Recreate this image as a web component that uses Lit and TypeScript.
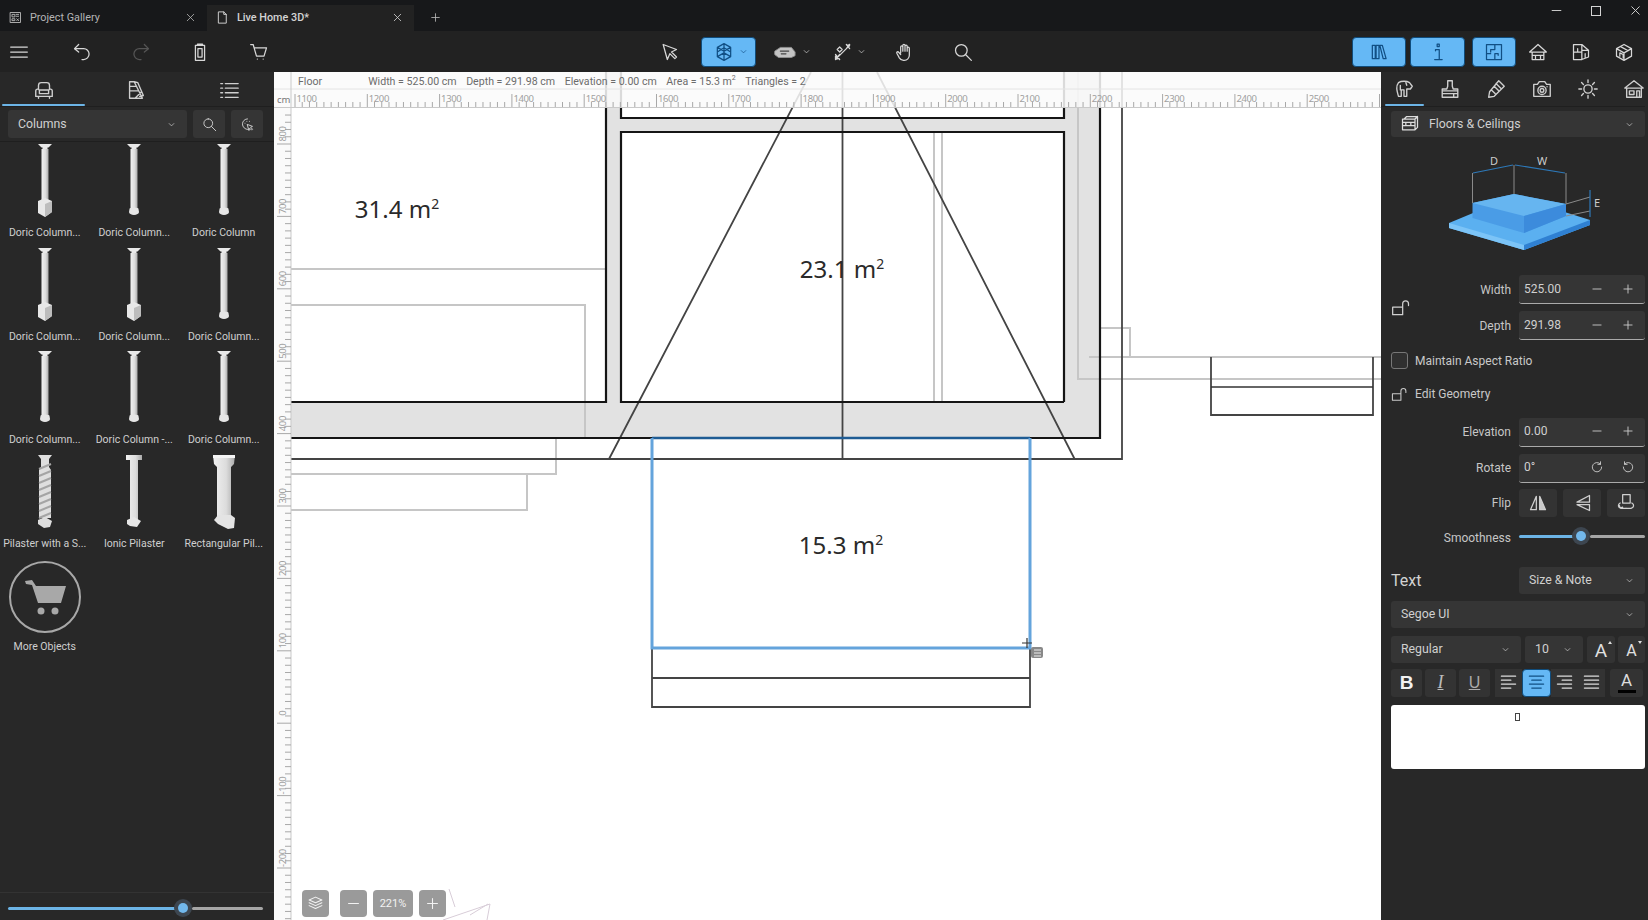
import { LitElement, html, css, svg } from "lit";
import { customElement } from "lit/decorators.js";

const ic = (d: string, cls = "") => html`<svg class="ico ${cls}" viewBox="0 0 24 24"><path d=${d}></path></svg>`;
const P = {
  gallery: "M4 4h16v16H4z M7 7h4v4H7z M13 7h4 M13 10h4 M7 14h4v3H7z M14 14l3 3 M17 14l-3 3",
  doc: "M6 3h8l4 4v14H6z M14 3v4h4",
  close: "M6 6l12 12M18 6L6 18",
  plus: "M5 12h14M12 5v14",
  minus: "M5 12h14",
  menu: "M2 6h20M2 12h20M2 18h20",
  undo: "M8 3L3 8l5 4 M3 8h11a6.5 6.5 0 0 1 0 13h-2",
  redo: "M16 3l5 5-5 4 M21 8H10a6.5 6.5 0 0 0 0 13h2",
  clip: "M9 4V2.5h6V4 M6.5 4h11v18h-11z M9.5 8h5v10h-5z",
  cart: "M2 3h3l4 14h9l3-10H6 M10 20.5h.01 M17 20.5h.01",
  cursor: "M5 3l5 18 3-7 6 6 2-2-6-6 6-3z",
  cube: "M12 2l8 4.5v11L12 22l-8-4.5v-11z M4 6.5L12 11l8-4.5 M12 11v11 M4 12l8-5 8 5 M4 17.5L12 13l8 4.5 M12 2v9",
  floor: "M1 11l6-4h12l4 5v4l-4 2H5l-4-3z",
  floorIn: "M7 11h9M8 14h5",
  dims: "M4 20L20 4 M3 17l3 3-3 1z M17 4l3-1-1 3 M8 6l3 3-3 3-3-3z M16 3l4 5 M20 3l-4 5 M3 15l5 6 M8 15l-5 6",
  hand: "M8 13V6a1.3 1.3 0 0 1 2.6 0v5 M10.6 11V4a1.3 1.3 0 0 1 2.6 0v7 M13.2 11V5a1.3 1.3 0 0 1 2.6 0v6 M15.8 11V7.5a1.3 1.3 0 0 1 2.6 0V16a6 6 0 0 1-6 6h-1a6 6 0 0 1-5-3l-3-5.5c-.7-1.4 1.2-2.5 2.2-1.2L8 15",
  search: "M10 3a7 7 0 1 1 0 14 7 7 0 0 1 0-14z M15 15l7 7",
  books: "M4 4h3.5v16H4z M8.5 4H12v16H8.5z M13 4h3l4.5 16h-3.5z",
  info: "M11 2.500h2.500v3H11z M9 9h4.500v11 M8 21h9 M9 9v1.500",
  plan: "M3 3h18v18H3z M13 3v6H8v3 M13 21v-7h4v2 M3 14h5",
  home: "M12 3L2 12h3v9h14v-9h3z M5 12h14 M9 21v-5h6v5 M5 16h14",
  homePlan: "M3 3h10l8 7v8l-8 3H3z M13 3v18 M3 12h10 M8 8v4 M13 10h8 M17 14v5",
  home3d: "M12 3l9 5v9l-9 5-9-5V8z M3 8l9 5 9-5 M12 13v9 M8 5.5l9 5 M7 17v-4l4 2v4",
  sofa: "M6 11V7a3 3 0 0 1 3-3h6a3 3 0 0 1 3 3v4 M3 13a2 2 0 0 1 4 0v3h10v-3a2 2 0 0 1 4 0v6H3z M6 19v2 M18 19v2 M7 12h10",
  swatch: "M5 3h5l9 18H5z M10 3l4 1 6 14-4 1 M5 8h7 M5 13h9.5 M11 21l7-7",
  list: "M3 5h2M8 5h14M3 10h2M8 10h14M3 15h2M8 15h14M3 20h2M8 20h14",
  tree: "M6 20c-2-7-3-11 0-15 3-2 9-2 12 0l3 4-2 3h-4v8h-3v-7H9v7z M14 5l1 3 M8 8v5",
  stamp: "M9.5 3h5v6l1 3h5v5h-17v-5h5l1-3z M3.5 17h17v4h-17z M3.5 14h17 M16 17v4",
  brush: "M15 3l6 6L10 20l-6 1 1-6z M12 6l6 6 M7 13l4 4 M10 9l5 5",
  camera: "M3 7h4l2-3h6l2 3h4v13H3z M12 9a4.5 4.5 0 1 1 0 9 4.5 4.5 0 0 1 0-9z M12 11.5a2 2 0 1 1 0 4 2 2 0 0 1 0-4z M17.5 9.5h.01",
  sun: "M12 7.5a4.5 4.5 0 1 1 0 9 4.5 4.5 0 0 1 0-9z M12 2v3M12 19v3M2 12h3M19 12h3M5 5l2 2M17 17l2 2M19 5l-2 2M7 17l-2 2",
  house: "M12 3L2 11h2v10h16V11h2z M4 11h16 M7 14h5v4H7z M15 14h3v7h-3z",
  floors: "M5 6l3-3h13v13l-3 3H3V6h15v13 M18 6l3-3 M3 10h15 M3 14h15 M7 10v4 M13 10v4",
  lock: "M2 11h12v9H2z M14 11V7a3.5 3.5 0 0 1 7 0v2",
  cw: "M18 7a8 8 0 1 0 2 5 M18 3v4.5h-4.5",
  ccw: "M6 7a8 8 0 1 1-2 5 M6 3v4.5h4.5",
  flipV: "M21 3v8L6 11z M21 21v-7L6 14z",
  flip3: "M8 2h9v10H8z M5 12C2 14 2 17 6 18.5h12c4-1.5 4-4.500 1-6.500 M12 18v.01 M4 15l1 3 3-1",
  pick: "M12 3a8 8 0 0 0-8 8c0 5 4 9 9 9 M8 10h.01 M11 7h.01 M15 7h.01 M12 12l8 3-3 1.500 3 3-1.500 1.500-3-3-1 3z",
  alL: "M3 4h18M3 9h12M3 14h18M3 19h12",
  alC: "M3 4h18M6 9h12M3 14h18M6 19h12",
  alR: "M3 4h18M9 9h12M3 14h18M9 19h12",
  alJ: "M3 4h18M3 9h18M3 14h18M3 19h18",
  layers: "M12 3l9 4-9 4-9-4z M3 11l9 4 9-4 M3 15l9 4 9-4",
  chev: "M7 10l5 5 5-5",
};

const tool = (d: string, cls = "") => html`<span class="tool ${cls}">${ic(d)}</span>`;

function column(kind: number) {
  return svg`<svg class="col" viewBox="0 0 44 76">
    <defs><linearGradient id="g${kind}"><stop offset="0" stop-color="#f1f1f1"/><stop offset=".6" stop-color="#dcdcdc"/><stop offset="1" stop-color="#a9a9a9"/></linearGradient></defs>
    ${kind === 5
      ? svg`<path d="M11 1h22l-1 9-3 3v50H15V13l-3-3z" fill="url(#g5)"/><path d="M12 66l4-5h13l4 3-1 10-6 1-10-5z" fill="#e4e4e4"/><path d="M11 1h22v3H11z" fill="#f4f4f4"/>`
      : kind === 4
      ? svg`<path d="M14 1h16v5h-4v60h-8V6h-4z" fill="url(#g4)"/><path d="M15 66l7-3 7 4-4 6-7-1-3-2z" fill="#e6e6e6"/>`
      : kind === 3
      ? svg`<path d="M15 1h14l-3 4v8l2 3v48h-12V16l2-3V5z" fill="#dedede"/>
        ${[0,1,2,3,4,5,6,7].map((i) => svg`<path d="M16 ${15 + i * 7}l12 -5" stroke="#a4a4a4" stroke-width="2"/>`)}
        <path d="M15 66l7-3 7 4-2 6-6 1-6-4z" fill="#ddd"/>`
      : svg`<path d="M15 1h14l-3.500 3.500h-1V6h-5V4.500h-1z" fill="#e9e9e9"/><rect x="18.500" y="6" width="7" height="${kind === 1 ? 52 : 60}" fill="url(#g${kind})"/>
        ${kind === 1
          ? svg`<path d="M15 58l7-3 7 3v11l-7 5-7-4z" fill="#e8e8e8"/><path d="M22 61l7-3v11l-7 5z" fill="#bdbdbd"/>`
          : svg`<path d="M17.500 66a4.500 1.500 0 0 1 9 0l.5 3a5 3 0 0 1-10 0z" fill="#e6e6e6"/>`}`}
  </svg>`;
}

const items: [string, number][] = [
  ["Doric Column...", 1], ["Doric Column...", 2], ["Doric Column", 2],
  ["Doric Column...", 1], ["Doric Column...", 1], ["Doric Column...", 2],
  ["Doric Column...", 2], ["Doric Column -...", 2], ["Doric Column...", 2],
  ["Pilaster with a S...", 3], ["Ionic Pilaster", 4], ["Rectangular Pil...", 5],
];

const range = (n: number) => Array.from({ length: n }, (_, i) => i);
const X0 = 295, XP = 72.3, Y0 = 142, YP = 72.4;

function rulers() {
  const hTicks = range(170).map((i) => {
    const x = X0 + (i * XP) / 10;
    if (x > 1381) return null;
    const major = i % 10 === 0;
    return svg`<line x1=${x} x2=${x} y1=${major ? 94 : 102} y2="107" class="tick"/>`;
  });
  const hLabels = range(15).map((i) => svg`<text class="rl" x=${X0 + i * XP + 1.5} y="101.500">${1100 + i * 100}</text>`);
  const vTicks = range(115).map((i) => {
    const y = Y0 - 35 + (i * YP) / 10 + 0.8;
    const n = i - 5;
    const major = ((n % 10) + 10) % 10 === 0;
    return y > 108 && y < 920
      ? svg`<line y1=${y} y2=${y} x1=${major ? 277 : 285} x2="291" class="tick"/>` : null;
  });
  const vLabels = range(11).map((i) => {
    const y = Y0 + i * YP - 8;
    const v = 800 - i * 100;
    return svg`<text class="rl" transform="rotate(-90 286 ${y})" x="286" y=${y} text-anchor="middle">${v}</text>`;
  });
  return svg`${hTicks}${hLabels}${vTicks}${vLabels}`;
}

function area(x: number, y: number, t: string) {
  return svg`<text class="area" x=${x} y=${y} text-anchor="middle">${t} m<tspan class="sup" dy="-9">2</tspan></text>`;
}

function plan() {
  return svg`<svg class="plan" viewBox="274 72 1107 848">
    <rect x="274" y="72" width="1107" height="848" fill="#fff"/>
    <path d="M606 72H1100V438H291V402H606zM621 72V118H1064V72zM621 132V402H1064V132z" fill="#e2e2e2" fill-rule="evenodd"/>
    <g class="lg">
      <path d="M291 269H606M291 305H585V438M291 474H556V438M291 510H527V474"/>
      <path d="M934 132V402M942 132V402"/>
      <path d="M1064 72V118M1078 72V379H1381M1089 357H1381M1100 328H1130V357"/>
    </g>
    <g class="thin">
      <path d="M1211 357V415H1373V357M842.500 72V459M291 459H1122V72"/>
      <path d="M811 72L609 459M877 72L1074.600 459"/>
      <path d="M652 648V707H1030V648M652 678H1030"/>
    </g>
    <path class="thick" d="M606 72V402H291M1064 402V132H621V402H1064M621 72V118H1064V72M291 438H1100V72"/>
    <path d="M1211 387H1373" stroke="#333" stroke-width="1.500" fill="none"/>
    <path d="M652 438H1030" stroke="#1f5c94" stroke-width="2.500" fill="none"/>
    <path d="M652 438V648H1030V438" stroke="#64a4dc" stroke-width="3" fill="none"/>
    ${area(397, 218, "31.4")}${area(842, 278, "23.1")}${area(841, 554, "15.3")}
    <path d="M1022 643h10M1027 638v10" stroke="#333" stroke-width="1.200"/>
    <rect x="1031" y="647" width="12" height="11" rx="2" fill="#888"/>
    <path d="M1034 650h7M1034 653h7M1034 656h7" stroke="#eee"/>
    <path d="M449 889l6 18 M443 920l47-16-3 16 M470 915l18-11" stroke="#d8cdd8" fill="none"/>
    <rect x="274" y="72" width="1107" height="35" fill="#fafafa" opacity=".86"/>
    <rect x="274" y="107" width="17" height="813" fill="#fafafa"/>
    <path d="M274 89H1381" stroke="#e4e4e4"/>
    <path d="M291 72V920M274 107.500H1381" stroke="#c9c9c9"/>
    ${rulers()}
    <text class="rl cm" x="277" y="103">cm</text>
  </svg>`;
}

function diagram() {
  return svg`<svg class="diagram" viewBox="1391 137 254 138">
    <path d="M1449 223L1514 196 1590 220V225L1524 250 1449 228z" fill="#5bb0f0"/>
    <path d="M1449 223L1524 245V250L1449 228z" fill="#7cc4f7"/>
    <path d="M1524 245L1590 220V225L1524 250z" fill="#2f80d2"/>
    <path d="M1472.500 203V218L1524 233 1566 216V204L1514 194z" fill="#4a9ce6"/>
    <path d="M1472.500 203L1514 194 1566 204 1524 216z" fill="#66b5f0"/>
    <path d="M1524 216L1566 204V216L1524 233z" fill="#3c8bdc"/>
    <path d="M1472.500 173V203M1514 165V194M1566 173V204M1566 204L1590 197M1566 216L1590 211" stroke="#8a8a8a" fill="none"/>
    <path d="M1473 173L1513 165M1515 165L1565 173M1590 190V217" stroke="#2d78b8" stroke-width="1.200" fill="none"/>
    <text class="dl" x="1494" y="165" text-anchor="middle">D</text>
    <text class="dl" x="1542" y="165" text-anchor="middle">W</text>
    <text class="dl" x="1597" y="207" text-anchor="middle">E</text>
  </svg>`;
}

const slider = (fillPx: number) => html`<div class="slider">
  <span class="fill" style="width:${fillPx}px"></span><span class="thumb"></span><span class="rest"></span>
</div>`;

const numField = (label: string, value: string, a: string, b: string) => html`
  <span class="lab">${label}</span>
  <div class="input"><span class="val">${value}</span>${ic(a, "s")}${ic(b, "s")}</div>`;

@customElement("app-root")
export class AppRoot extends LitElement {
  static styles = css`
    :host { display: block; width: 1648px; height: 920px; overflow: hidden; background: #282828; font-family: Roboto, "Noto Sans", sans-serif; color: #d0d0d0; font-size: 11px; }
    * { box-sizing: border-box; }
    .ico { width: 20px; height: 20px; fill: none; stroke: currentColor; stroke-width: 1.500; stroke-linecap: round; stroke-linejoin: round; flex: none; display: block; }
    .ico.s { width: 14px; height: 14px; }
    .ico.c { width: 11px; height: 11px; }
    .ico.pad { width: 26px; height: 22px; }
    .ico.pad path { fill: #c4c4c4; stroke: #8f8f8f; stroke-width: 1; }
    .padwrap { position: relative; display: flex; }
    .padwrap .ico.mark { position: absolute; left: 0; top: 0; width: 26px; height: 22px; color: #444; }
    .title { height: 31px; background: #17181a; display: flex; align-items: flex-end; }
    .tab { height: 26px; width: 207px; display: flex; align-items: center; padding: 0 10px 2px 8px; gap: 7px; color: #b4b4b4; font-size: 10.800px; }
    .tab .ico { width: 15px; height: 15px; }
    .tab .x { margin-left: auto; width: 13px; height: 13px; }
    .tab.on { background: #222; color: #d4d4d4; margin-right: 15px; font-weight: 500; }
    .newtab { height: 26px; display: flex; align-items: center; color: #bbb; padding-bottom: 2px; }
    .newtab .ico { width: 13px; height: 13px; }
    .win { margin-left: auto; height: 31px; display: flex; align-items: center; color: #d4d4d4; gap: 24px; padding: 0 5px 10px 0; }
    .win .ico { width: 15px; height: 15px; }
    .win .sq { width: 10px; height: 10px; border: 1.500px solid #d4d4d4; margin: 0 3px; }
    .bar { height: 41px; background: #222222; display: flex; align-items: center; color: #d8d8d8; }
    .tool { display: flex; align-items: center; justify-content: center; height: 30px; width: 38px; gap: 3px; flex: none; }
    .tool.wide { width: 44px; }
    .tool.w36 { width: 36px; }
    .tool.blue { background: #65b8f5; color: #114f84; border: 1px solid #0f4c7c; border-radius: 4px; width: 55px; }
    .tool.off { color: #555; }
    .g1 { display: flex; gap: 21px; width: 278px; }
    .g1 .tool:first-child { margin-right: 4px; }
    .g2 { display: flex; gap: 14px; margin-left: 373px; }
    .g2 .blue { padding-left: 5px; gap: 4px; }
    .g2 .far { margin-left: 9px; }
    .g3 { margin-left: auto; display: flex; padding-right: 3px; }
    .g3 .tool { width: 43px; }
    .g3 .tool.blue.a { width: 54px; margin-right: 4px; }
    .g3 .tool.blue.b { width: 55px; margin-right: 7px; }
    .g3 .tool.blue.c2 { width: 44px; }
    .main { display: flex; height: 848px; }
    .left { width: 274px; background: #282828; display: flex; flex-direction: column; flex: none; }
    .tabs { height: 35px; display: flex; border-bottom: 1px solid #1f1f1f; color: #cfcfcf; flex: none; }
    .ltab { width: 88px; display: flex; flex-direction: column; align-items: center; padding-top: 7px; flex: none; }
    .ltab.on { width: 87px; }
    .ltab:nth-child(2) { width: 98px; }
    .ltab .u { margin-top: 3px; height: 3px; width: 83px; background: transparent; border-radius: 2px; }
    .ltab.on .u { background: #6cb4e6; }
    .ltab .ico { width: 22px; height: 22px; }
    .filter { display: flex; gap: 6px; padding: 3px 11px 3px 8px; height: 35px; border-bottom: 1px solid #1f1f1f; flex: none; }
    .sel { background: #353535; border-radius: 3px; height: 28px; display: flex; align-items: center; padding: 0 10px; color: #d0d0d0; font-size: 12.300px; }
    .sel .ico.c { margin-left: auto; }
    .filter .sel { width: 179px; }
    .sbtn { width: 32px; height: 28px; background: #353535; border-radius: 3px; display: flex; align-items: center; justify-content: center; }
    .sbtn .ico { width: 15px; height: 15px; }
    .grid { flex: 1; display: grid; grid-template-columns: repeat(3, 89.500px); grid-auto-rows: 103.500px; align-content: start; padding-top: 1px; }
    .item { display: flex; flex-direction: column; align-items: center; text-align: center; white-space: nowrap; color: #cfcfcf; font-size: 10.500px; }
    .col { width: 44px; height: 76px; flex: none; margin-bottom: 7px; }
    .more { width: 72px; height: 72px; border-radius: 50%; border: 2px solid #a8a8a8; display: flex; align-items: center; justify-content: center; margin: 4px 0 7px; flex: none; }
    .more svg { width: 48px; height: 48px; fill: #a8a8a8; }
    .foot { height: 28px; border-top: 1px solid #333; display: flex; align-items: center; padding: 3px 11px 0 8px; flex: none; }
    .slider { display: flex; align-items: center; width: 100%; height: 16px; }
    .slider .fill { height: 3px; background: #6cb4e6; border-radius: 2px; flex: none; }
    .slider .thumb { width: 10px; height: 10px; background: #72b8ec; border-radius: 50%; box-shadow: 0 0 0 4px #3d4650; margin: 0 1px; flex: none; }
    .slider .rest { height: 3px; background: #a5a5a5; border-radius: 2px; flex: 1; margin-left: 3px; }
    .canvas { position: relative; flex: 1; background: #fff; overflow: hidden; }
    .plan { display: block; width: 1107px; height: 848px; }
    .plan .lg path { fill: none; stroke: #c6c6c6; stroke-width: 2; }
    .plan .thin path { fill: none; stroke: #444; stroke-width: 1.800; }
    .plan .thick { fill: none; stroke: #151515; stroke-width: 2.200; }
    .plan .area { font-size: 24px; fill: #2a2a2a; font-family: "Noto Sans", sans-serif; }
    .plan .sup { font-size: 14px; }
    .plan .rl { font-size: 9.500px; fill: #a0a0a0; font-family: "Noto Sans", sans-serif; letter-spacing: -0.4px; }
    .plan .cm { fill: #777; font-size: 9.500px; letter-spacing: 0; }
    .plan .tick { stroke: #a8a8a8; stroke-width: 1; }
    .status { position: absolute; left: 24px; top: 1px; height: 17px; display: flex; align-items: center; gap: 9.600px; color: #6c6c6c; font-size: 10.600px; white-space: nowrap; }
    .status .first { margin-right: 36.500px; }
    .status sup { font-size: 7px; line-height: 0; }
    .zoom { position: absolute; left: 28px; bottom: 3px; display: flex; gap: 6px; color: #f2f2f2; }
    .zb { height: 27px; width: 27px; background: #9a9a9a; border-radius: 4px; display: flex; align-items: center; justify-content: center; font-size: 11px; }
    .zb .ico { width: 17px; height: 17px; }
    .zb.p { width: 40px; }
    .zb.first { margin-right: 5px; }
    .right { width: 267px; flex: none; background: #282828; padding: 0 3px 0 0; display: flex; flex-direction: column; }
    .rtabs { height: 35px; display: flex; border-bottom: 1px solid #1f1f1f; color: #cfcfcf; flex: none; width: 264px; }
    .rtab { width: 46px; display: flex; flex-direction: column; align-items: center; padding-top: 6px; flex: none; }
    .rtab .ico { width: 22px; height: 22px; }
    .rtab .u { margin-top: 4px; height: 3px; width: 39px; background: transparent; border-radius: 2px; }
    .rtab.on .u { background: #6cb4e6; }
    .body { padding-left: 10px; display: flex; flex-direction: column; flex: 1; }
    .sel.head { margin-top: 4px; height: 26px; gap: 9px; flex: none; padding-left: 9px; }
    .sel.head .ico:first-child { width: 20px; height: 20px; color: #ddd; }
    .diagram { display: block; width: 254px; height: 138px; flex: none; }
    .dl { font-size: 11px; fill: #ccc; font-family: "Noto Sans", sans-serif; }
    .fields, .flip, .smooth { display: grid; grid-template-columns: 20px 100px 134px; align-items: center; }
    .fields { row-gap: 7px; grid-auto-rows: 29px; }
    .fields .lab, .flip .lab, .smooth .lab { grid-column: 2; }
    .fields .input, .flips, .smooth .slider { grid-column: 3; margin-left: 8px; width: 126px; }
    .fields > .lk { grid-row: 1 / span 2; grid-column: 1; }
    .lab { text-align: right; font-size: 12px; color: #c6c6c6; }
    .smooth .lab { padding-top: 3px; }
    .input { height: 29px; background: #353535; border-bottom: 1.500px solid #aaa; border-radius: 3px; display: flex; align-items: center; padding: 0 10px 1px 5px; color: #d0d0d0; font-size: 12px; }
    .input .val { flex: 1; }
    .input .ico.s + .ico.s { margin-left: 17px; }
    .chk { display: flex; align-items: center; gap: 7px; font-size: 12px; color: #c9c9c9; margin-top: 12px; height: 17px; }
    .chk .box { width: 17px; height: 17px; border: 1px solid #777; border-radius: 3px; background: #303030; flex: none; }
    .chk.edit { margin-top: 16px; height: 18px; }
    .chk.edit .ico { width: 17px; height: 17px; }
    .f2 { margin-top: 15px; row-gap: 7.500px; grid-auto-rows: 28.500px; }
    .f2 .input { height: 28.500px; }
    .flip { margin-top: 6px; height: 28px; }
    .flips { display: flex; justify-content: space-between; }
    .flips span { width: 38px; height: 28px; background: #333; border-radius: 3px; display: flex; align-items: center; justify-content: center; }
    .half { display: flex; align-items: center; gap: 1px; }
    .half svg { width: 20px; height: 20px; }
    .smooth { margin-top: 11px; height: 16px; }
    .textrow { display: flex; justify-content: space-between; align-items: center; margin-top: 23px; }
    .textrow b { font-weight: 400; font-size: 16px; color: #d2d2d2; }
    .textrow .sel { width: 126px; height: 27px; padding-left: 10px; }
    .fsel { margin-top: 7px; height: 27px; }
    .row { display: flex; margin-top: 8px; height: 27px; }
    .row .sel { height: 27px; }
    .row .st { width: 130px; margin-right: 4px; }
    .row .sz { width: 58px; margin-right: 4px; }
    .aa { width: 28px; height: 27px; background: #333; border-radius: 3px; display: flex; align-items: flex-end; justify-content: center; font-size: 19px; line-height: 25px; color: #e0e0e0; margin-right: 3px; position: relative; }
    .aa.small { font-size: 16px; margin-right: 0; width: 27px; }
    .aa i { position: absolute; right: 3px; top: 5px; width: 0; height: 0; border-left: 2.500px solid transparent; border-right: 2.500px solid transparent; border-bottom: 3px solid #ddd; }
    .aa.small i { border-bottom: 0; border-top: 3px solid #ddd; }
    .fmt { display: flex; margin-top: 6px; height: 28px; }
    .fb { width: 31px; height: 28px; background: #333; border-radius: 3px; margin-right: 3px; display: flex; align-items: center; justify-content: center; color: #ddd; font-size: 16px; }
    .fb.bold { font-weight: 700; font-size: 19px; color: #f2f2f2; font-family: "Liberation Sans", sans-serif; }
    .fb.it { font-style: italic; font-family: "Liberation Serif", serif; text-decoration: underline; text-underline-offset: 1px; font-size: 18px; color: #bbb; }
    .fb.un { text-decoration: underline; font-size: 16px; color: #aaa; margin-right: 5px; font-family: "Liberation Sans", sans-serif; }
    .fb.al { width: 27px; margin: 0; border-radius: 0; }
    .fb.al .ico { width: 19px; height: 19px; }
    .fb.al.on { background: #65b8f5; color: #114f84; border: 1px solid #0f4c7c; border-radius: 4px; width: 29px; }
    .fb.col-a { width: 33px; margin: 0 0 0 5px; flex-direction: column; font-size: 17px; line-height: 17px; }
    .fb.col-a i { width: 18px; height: 3px; background: #000; display: block; margin-top: 1px; }
    .note { margin-top: 8px; height: 64px; background: #fff; border-radius: 3px; display: flex; justify-content: center; padding-top: 8px; }
    .note span { width: 5px; height: 8px; border: 1.200px solid #444; margin-right: 2px; }
  `;

  render() {
    const tabsLeft = [P.sofa, P.swatch, P.list];
    const tabsRight = [P.tree, P.stamp, P.brush, P.camera, P.sun, P.house];
    return html`
      <div class="title">
        <div class="tab">${ic(P.gallery)}<span>Project Gallery</span>${ic(P.close, "x")}</div>
        <div class="tab on">${ic(P.doc)}<span>Live Home 3D*</span>${ic(P.close, "x")}</div>
        <div class="newtab">${ic(P.plus)}</div>
        <div class="win">${ic(P.minus)}<span class="sq"></span>${ic(P.close)}</div>
      </div>
      <div class="bar">
        <div class="g1">${tool(P.menu)}${tool(P.undo)}${tool(P.redo, "off")}${tool(P.clip)}${tool(P.cart)}</div>
        <div class="g2">
          ${tool(P.cursor, "w36")}
          <span class="tool blue">${ic(P.cube)}${ic(P.chev, "c")}</span>
          <span class="tool wide"><span class="padwrap">${ic(P.floor, "pad")}${ic(P.floorIn, "mark")}</span>${ic(P.chev, "c")}</span>
          <span class="tool wide">${ic(P.dims)}${ic(P.chev, "c")}</span>
          ${tool(P.hand, "w36")}
          ${tool(P.search, "w36 far")}
        </div>
        <div class="g3">
          ${tool(P.books, "blue a")}${tool(P.info, "blue b")}${tool(P.plan, "blue c2")}
          ${tool(P.home)}${tool(P.homePlan)}${tool(P.home3d)}
        </div>
      </div>
      <div class="main">
        <aside class="left">
          <div class="tabs">
            ${tabsLeft.map((d, i) => html`<div class="ltab ${i === 0 ? "on" : ""}">${ic(d)}<div class="u"></div></div>`)}
          </div>
          <div class="filter">
            <div class="sel"><span>Columns</span>${ic(P.chev, "c")}</div>
            <div class="sbtn">${ic(P.search)}</div>
            <div class="sbtn">${ic(P.pick)}</div>
          </div>
          <div class="grid">
            ${items.map(([t, k]) => html`<div class="item">${column(k)}<span>${t}</span></div>`)}
            <div class="item">
              <div class="more"><svg viewBox="0 0 48 48"><path d="M4 8l7-1 4 6h30l-5 17H17L11 12 5 11z"></path><circle cx="20" cy="38" r="3.500"></circle><circle cx="34" cy="38" r="3.500"></circle></svg></div>
              <span>More Objects</span>
            </div>
          </div>
          <div class="foot">${slider(169)}</div>
        </aside>
        <main class="canvas">
          ${plan()}
          <div class="status">
            <span class="first">Floor</span>
            <span>Width = 525.00 cm</span><span>Depth = 291.98 cm</span><span>Elevation = 0.00 cm</span>
            <span>Area = 15.3 m<sup>2</sup></span><span>Triangles = 2</span>
          </div>
          <div class="zoom">
            <div class="zb first">${ic(P.layers)}</div>
            <div class="zb">${ic(P.minus)}</div>
            <div class="zb p">221%</div>
            <div class="zb">${ic(P.plus)}</div>
          </div>
        </main>
        <aside class="right">
          <div class="rtabs">
            ${tabsRight.map((d, i) => html`<div class="rtab ${i === 0 ? "on" : ""}">${ic(d)}<div class="u"></div></div>`)}
          </div>
          <div class="body">
            <div class="sel head">${ic(P.floors)}<span>Floors &amp; Ceilings</span>${ic(P.chev, "c")}</div>
            ${diagram()}
            <div class="fields">
              <span class="lk">${ic(P.lock)}</span>
              ${numField("Width", "525.00", P.minus, P.plus)}
              ${numField("Depth", "291.98", P.minus, P.plus)}
            </div>
            <div class="chk"><span class="box"></span><span>Maintain Aspect Ratio</span></div>
            <div class="chk edit">${ic(P.lock)}<span>Edit Geometry</span></div>
            <div class="fields f2">
              ${numField("Elevation", "0.00", P.minus, P.plus)}
              ${numField("Rotate", "0°", P.cw, P.ccw)}
            </div>
            <div class="flip">
              <span class="lab">Flip</span>
              <div class="flips">
                <span><svg class="ico" viewBox="0 0 24 24"><path d="M10 4L3 20h7z"></path><path d="M14 4l7 16h-7z" fill="#c8c8c8"></path></svg></span>
                <span>${ic(P.flipV)}</span>
                <span>${ic(P.flip3)}</span>
              </div>
            </div>
            <div class="smooth"><span class="lab">Smoothness</span>${slider(56)}</div>
            <div class="textrow"><b>Text</b><div class="sel"><span>Size &amp; Note</span>${ic(P.chev, "c")}</div></div>
            <div class="sel fsel"><span>Segoe UI</span>${ic(P.chev, "c")}</div>
            <div class="row">
              <div class="sel st"><span>Regular</span>${ic(P.chev, "c")}</div>
              <div class="sel sz"><span>10</span>${ic(P.chev, "c")}</div>
              <div class="aa">A<i></i></div>
              <div class="aa small">A<i></i></div>
            </div>
            <div class="fmt">
              <div class="fb bold">B</div><div class="fb it">I</div><div class="fb un">U</div>
              <div class="fb al">${ic(P.alL)}</div><div class="fb al on">${ic(P.alC)}</div>
              <div class="fb al">${ic(P.alR)}</div><div class="fb al">${ic(P.alJ)}</div>
              <div class="fb col-a">A<i></i></div>
            </div>
            <div class="note"><span></span></div>
          </div>
        </aside>
      </div>
    `;
  }
}
